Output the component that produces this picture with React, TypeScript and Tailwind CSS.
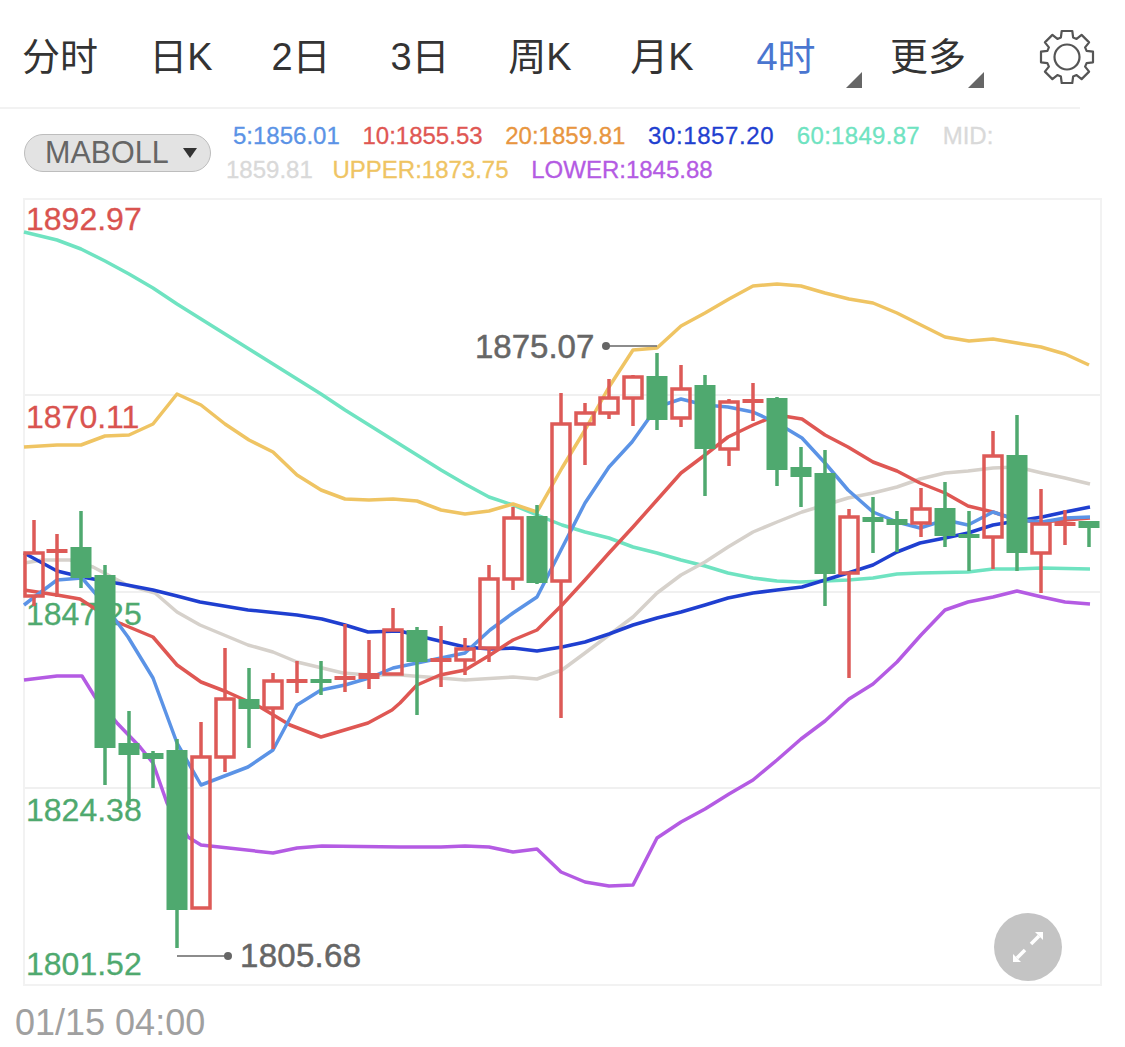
const tabs = [
  { label: '分时', w: 'w-[120px]' },
  { label: '日K', w: 'w-[122px]' },
  { label: '2日', w: 'w-[118px]' },
  { label: '3日', w: 'w-[120px]' },
  { label: '周K', w: 'w-[120px]' },
  { label: '月K', w: 'w-[124px]' },
  { label: '4时', w: 'w-[124px]', active: true, corner: 'left-[122px]' },
  { label: '更多', w: 'w-[160px]', corner: 'left-[120px]' },
];

const legend = [
  { text: '5:1856.01', cls: 'ml-[7px] mr-[16px] text-[#5b93e6]' },
  { text: '10:1855.53', cls: 'mr-[16px] text-[#df5753]' },
  { text: '20:1859.81', cls: 'mr-[16px] text-[#e8963f]' },
  { text: '30:1857.20', cls: 'mr-[16px] tracking-[0.6px] text-[#1f3fd0]' },
  { text: '60:1849.87', cls: 'mr-[16px] tracking-[0.3px] text-[#6fe3c1]' },
  { text: 'MID:', cls: 'mr-[16px] text-[#d9d9d9]' },
  { text: '1859.81', cls: 'mr-[13px] text-[#d9d9d9]' },
  { text: 'UPPER:1873.75', cls: 'mr-[16px] text-[#efc463]' },
  { text: 'LOWER:1845.88', cls: 'mr-[16px] text-[#b45be3]' },
];

const GREEN = '#4fa96f';
const RED = '#dd5a57';

// x, body top, body bottom, wick top, wick bottom, up (red hollow) or down (green filled)
const candles: [number, number, number, number, number, boolean][] = [
  [34, 553, 596, 520, 606, true],
  [57, 549, 553, 534, 597, true],
  [81, 547, 578, 511, 588, false],
  [105, 575, 748, 565, 785, false],
  [129, 743, 755, 711, 805, false],
  [153, 753, 759, 751, 788, false],
  [177, 750, 910, 739, 948, false],
  [201, 757, 908, 722, 908, true],
  [225, 699, 757, 648, 772, true],
  [249, 699, 709, 668, 748, false],
  [273, 681, 708, 673, 749, true],
  [297, 679, 683, 661, 693, true],
  [321, 679, 683, 661, 695, false],
  [345, 676, 680, 624, 692, true],
  [369, 673, 679, 640, 689, true],
  [393, 630, 674, 608, 675, true],
  [417, 630, 662, 627, 715, false],
  [441, 658, 662, 626, 687, true],
  [465, 649, 660, 638, 675, true],
  [489, 579, 648, 565, 662, true],
  [513, 518, 579, 507, 590, true],
  [537, 516, 583, 505, 584, false],
  [561, 424, 581, 393, 718, true],
  [585, 413, 424, 403, 465, true],
  [609, 398, 413, 379, 419, true],
  [633, 377, 398, 375, 426, true],
  [657, 376, 420, 353, 430, false],
  [681, 389, 418, 365, 427, true],
  [705, 385, 449, 375, 496, false],
  [729, 402, 449, 399, 466, true],
  [753, 399, 403, 383, 421, true],
  [777, 398, 470, 397, 486, false],
  [801, 467, 477, 447, 507, false],
  [825, 473, 574, 450, 606, false],
  [849, 517, 573, 509, 678, true],
  [873, 517, 522, 497, 553, false],
  [897, 519, 525, 511, 552, false],
  [921, 509, 523, 488, 537, true],
  [945, 508, 536, 482, 547, false],
  [969, 534, 538, 511, 571, false],
  [993, 456, 537, 431, 569, true],
  [1017, 455, 553, 415, 571, false],
  [1041, 524, 553, 489, 593, true],
  [1065, 522, 526, 510, 545, true],
  [1089, 521, 528, 521, 547, false],
];

const lines: { color: string; points: string }[] = [
  {
    color: '#6fe3c1',
    points:
      '24,232 57,240 81,249 105,261 129,274 153,288 177,304 201,319 225,334 249,349 273,364 297,379 321,394 345,410 369,425 393,440 417,455 441,470 465,484 489,497 513,505 537,515 562,525 585,532 609,538 633,547 657,553 681,560 705,566 728,573 753,578 777,581 800,582 825,581 848,580 873,578 897,574 920,573 968,572 993,569 1017,569 1042,568 1090,569',
  },
  {
    color: '#efc463',
    points:
      '24,447 57,445 81,445 105,436 129,435 153,424 177,394 201,405 225,424 249,440 273,452 297,475 321,490 345,499 369,500 393,499 417,501 441,510 465,514 489,511 513,504 537,512 562,468 585,430 609,387 633,350 657,348 681,326 705,313 729,299 753,286 777,284 801,286 825,293 849,299 873,303 897,313 921,325 945,337 969,341 993,339 1017,343 1041,347 1065,354 1089,365',
  },
  {
    color: '#b45be3',
    points:
      '24,680 57,676 82,676 95,697 117,723 140,747 153,763 167,803 188,837 201,845 273,853 297,848 322,846 400,847 441,847 465,846 489,847 513,852 537,849 561,872 585,882 609,886 633,885 657,838 681,822 705,809 729,794 753,780 777,760 801,739 825,721 849,699 873,684 897,662 921,635 945,610 968,602 993,597 1017,591 1042,597 1065,602 1090,604',
  },
  {
    color: '#d6d1cb',
    points:
      '24,563 43,560 70,560 93,567 127,585 155,593 177,612 200,625 248,645 273,652 297,662 343,673 368,675 400,675 440,678 465,680 513,677 537,679 562,670 585,653 609,635 633,617 657,593 681,575 705,562 728,547 753,532 777,522 802,512 825,505 848,498 873,493 897,487 920,479 945,473 968,471 993,468 1017,467 1042,473 1065,478 1090,484',
  },
  {
    color: '#1f3fd0',
    points:
      '24,553 57,571 82,577 127,585 153,590 177,596 200,602 248,610 297,615 322,619 345,625 368,632 400,631 427,638 465,647 490,649 513,648 537,651 562,647 585,642 609,634 633,625 657,618 681,612 705,605 728,598 753,593 777,590 802,587 825,580 848,573 873,565 897,552 920,543 945,538 968,533 993,525 1017,521 1042,517 1065,512 1090,507',
  },
  {
    color: '#df5753',
    points:
      '24,590 57,595 80,599 97,610 117,622 153,637 177,665 201,682 227,692 260,707 290,725 321,737 368,723 392,710 400,703 417,685 440,675 465,670 490,655 513,640 537,630 562,605 585,580 609,553 633,527 657,500 681,473 705,455 728,437 753,425 777,415 802,419 825,435 848,447 873,462 897,471 920,483 945,493 968,506 993,512 1017,520 1042,522 1065,520 1090,518',
  },
  {
    color: '#5b93e6',
    points:
      '24,605 33,598 57,580 82,578 95,593 117,622 128,637 153,678 177,743 201,785 248,767 273,750 297,705 321,690 345,685 369,678 393,668 417,663 465,653 490,630 513,613 537,597 561,550 585,503 609,467 632,442 657,407 681,399 705,405 728,407 753,412 777,423 802,438 825,463 848,490 873,512 897,522 920,528 945,520 968,525 993,512 1017,520 1042,522 1065,518 1090,517',
  },
];

const axis = [
  { text: '1892.97', top: 'top-[1px]', color: 'text-[#d9534f]' },
  { text: '1870.11', top: 'top-[199px]', color: 'text-[#d9534f]' },
  { text: '1847.25', top: 'top-[396px]', color: 'text-[#4fa96f]' },
  { text: '1824.38', top: 'top-[592px]', color: 'text-[#4fa96f]' },
  { text: '1801.52', top: 'top-[746px]', color: 'text-[#4fa96f]' },
];

function gearPath(cx: number, cy: number) {
  const outer = 26.5;
  const inner = 20.5;
  const pts: string[] = [];
  for (let i = 0; i < 8; i++) {
    const a = (i * Math.PI) / 4 - Math.PI / 2;
    const at = (r: number, o: number) => `${(cx + r * Math.cos(a + o)).toFixed(1)},${(cy + r * Math.sin(a + o)).toFixed(1)}`;
    pts.push(at(inner, -0.3), at(outer, -0.2), at(outer, 0.2), at(inner, 0.3));
  }
  return `M${pts.join(' L')} Z`;
}

export default function App() {
  return (
    <div className="w-[1125px] h-[1047px] overflow-hidden bg-white font-['Liberation_Sans','Noto_Sans_CJK_SC',sans-serif]">
      {/* Tabs */}
      <div className="w-[1080px] h-[109px] border-b-2 border-[#f2f2f2] flex items-start pt-[19px]">
        {tabs.map(t => (
          <div key={t.label} className={`${t.w} relative h-[80px] flex-shrink-0`}>
            <div className={`text-center text-[38px] leading-[76px] ${t.active ? 'text-[#4a76d0]' : 'text-[#333]'}`}>
              {t.label}
            </div>
            {t.corner && (
              <svg className={`absolute ${t.corner} top-[53px] w-[16px] h-[16px]`} viewBox="0 0 16 16">
                <polygon points="16,0 16,16 0,16" fill="#666" />
              </svg>
            )}
          </div>
        ))}
        <svg className="w-[60px] h-[60px] flex-shrink-0 mt-[8px] ml-[29px]" viewBox="0 0 60 60" fill="none" stroke="#555" strokeWidth="2.2" strokeLinejoin="round">
          <path d={gearPath(30, 30)} />
          <circle cx="30" cy="30" r="12.5" />
        </svg>
      </div>

      {/* Indicator row */}
      <div className="h-[89px] flex items-start pl-[24px] pt-[10px]">
        <div className="w-[187px] h-[38px] mt-[15px] flex-shrink-0 rounded-full bg-[#e3e3e3] border border-[#bdbdbd] flex items-center pl-[20px] text-[30.5px] text-[#666]">
          MABOLL
          <svg className="w-[14px] h-[10px] ml-[14px]" viewBox="0 0 14 10">
            <polygon points="0,0 14,0 7,10" fill="#333" />
          </svg>
        </div>
        <div className="w-[834px] ml-[15px] text-[24px] leading-[34px] [-webkit-text-stroke:0.3px]">
          {legend.map(l => (
            <span key={l.text}>
              <span className={l.cls}>{l.text}</span>{' '}
            </span>
          ))}
        </div>
      </div>

      {/* Chart */}
      <div className="relative ml-[23px] w-[1079px] h-[788px] border-2 border-[#f2f2f2]">
        {axis.map(a => (
          <div key={a.text} className={`absolute left-[1px] ${a.top} text-[32px] leading-[37px] [-webkit-text-stroke:0.3px] ${a.color}`}>
            {a.text}
          </div>
        ))}
        <svg className="absolute left-[-2px] top-[-2px] w-[1079px] h-[788px]" viewBox="23 198 1079 788" fill="none">
          <line x1="25" y1="395" x2="1100" y2="395" stroke="#f0f0f0" strokeWidth="2" />
          <line x1="25" y1="592" x2="1100" y2="592" stroke="#f0f0f0" strokeWidth="2" />
          <line x1="25" y1="788" x2="1100" y2="788" stroke="#f0f0f0" strokeWidth="2" />
          {lines.map(l => (
            <polyline key={l.color} points={l.points} stroke={l.color} strokeWidth="3.5" strokeLinejoin="round" />
          ))}
          {candles.map(([x, top, bottom, wickTop, wickBottom, up]) => {
            const color = up ? RED : GREEN;
            const flat = bottom - top <= 6;
            return (
              <g key={x}>
                <line x1={x} y1={wickTop} x2={x} y2={top} stroke={color} strokeWidth="3.5" />
                <line x1={x} y1={bottom} x2={x} y2={wickBottom} stroke={color} strokeWidth="3.5" />
                {!up || flat ? (
                  <rect x={x - 10.5} y={top} width="21" height={bottom - top} fill={color} />
                ) : (
                  <rect x={x - 9} y={top} width="18" height={bottom - top} stroke={color} strokeWidth="3.5" />
                )}
              </g>
            );
          })}
          <line x1="606" y1="346" x2="657" y2="346" stroke="#666" strokeWidth="1.5" />
          <circle cx="606" cy="346" r="4" fill="#666" />
          <line x1="177" y1="956" x2="228" y2="956" stroke="#666" strokeWidth="1.5" />
          <circle cx="228" cy="956" r="4" fill="#666" />
        </svg>
        <div className="absolute left-[450px] top-[128px] text-[33px] leading-[37px] text-[#666] [-webkit-text-stroke:0.5px]">1875.07</div>
        <div className="absolute left-[215px] top-[737px] text-[33px] leading-[37px] tracking-[0.3px] text-[#666] [-webkit-text-stroke:0.5px]">1805.68</div>
        <div className="absolute left-[969px] top-[713px] w-[68px] h-[68px] rounded-full bg-[#c4c4c4] flex items-center justify-center">
          <svg className="w-[68px] h-[68px]" viewBox="0 0 68 68" fill="none" stroke="#fff" strokeWidth="3.5">
            <line x1="37" y1="31" x2="45" y2="23" />
            <polygon points="49,19 49,27 41,19" fill="#fff" stroke="none" />
            <line x1="31" y1="37" x2="23" y2="45" />
            <polygon points="19,49 19,41 27,49" fill="#fff" stroke="none" />
          </svg>
        </div>
      </div>

      {/* Timestamp */}
      <div className="pl-[15px] pt-[17px] text-[36px] leading-[40px] text-[#a0a0a0]">01/15 04:00</div>
    </div>
  );
}
